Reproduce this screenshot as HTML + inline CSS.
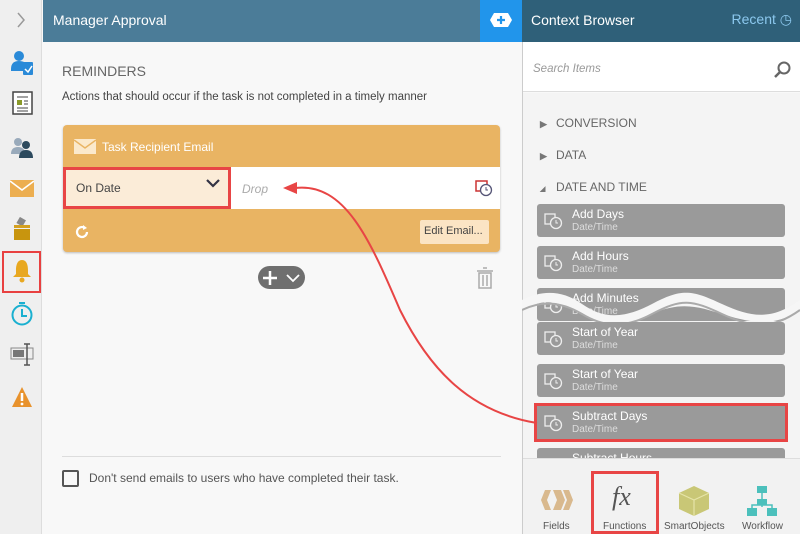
<!DOCTYPE html>
<html><head><meta charset="utf-8"><style>
*{margin:0;padding:0;box-sizing:border-box}
body{width:800px;height:534px;overflow:hidden;font-family:"Liberation Sans",sans-serif;background:#f8f8f8;position:relative}
.abs{position:absolute}
.item{position:absolute;left:537px;width:248px;height:33px;background:#9a9a9a;border-radius:3px;color:#fff}
.item .t{position:absolute;left:35px;top:3px;font-size:12px}
.item .s{position:absolute;left:35px;top:18px;font-size:10px;color:#ddd}
.item svg{position:absolute;left:7px;top:8px}
.cat{position:absolute;left:540px;font-size:12px;color:#666}
.cat b{display:inline-block;font-size:9px;color:#777;width:16px}
.tab{position:absolute;top:521px;font-size:10px;color:#555;text-align:center}
</style></head><body>
<div class="abs" style="left:0;top:0;width:42px;height:534px;background:#efefef;border-right:1px solid #ddd"></div>
<svg class="abs" style="left:16px;top:12px" width="10" height="16"><path d="M2 1l6 7-6 7" stroke="#999" stroke-width="1.5" fill="none"/></svg>
<svg class="abs" style="left:10px;top:50px" width="24" height="26"><circle cx="9" cy="6" r="5" fill="#2a8ad8"/><path d="M1 19q0-8 8-8q7 0 8 5v5H1z" fill="#2a8ad8"/><rect x="13" y="12" width="10" height="13" rx="1" fill="#2a8ad8"/><path d="M15 19l3 3 4-6" stroke="#fff" stroke-width="1.5" fill="none"/></svg>
<svg class="abs" style="left:12px;top:91px" width="22" height="24"><rect x="1" y="1" width="19" height="22" fill="#fff" stroke="#444" stroke-width="1.5"/><rect x="5" y="9" width="5" height="5" fill="#8a9a2a"/><path d="M5 6h11M12 10h4M12 13h4M5 17h11M5 20h11" stroke="#444"/></svg>
<svg class="abs" style="left:10px;top:137px" width="24" height="22"><circle cx="8" cy="5" r="4" fill="#9ab"/><path d="M1 17q0-7 7-7t7 7z" fill="#9ab"/><circle cx="16" cy="8" r="4" fill="#2c4a5e"/><path d="M9 21q0-8 7-8t7 8z" fill="#2c4a5e"/></svg>
<svg class="abs" style="left:10px;top:180px" width="24" height="17"><rect width="24" height="17" fill="#ecae50"/><path d="M0 1l12 9 12-9" stroke="#fff" stroke-width="1.5" fill="none"/></svg>
<svg class="abs" style="left:12px;top:217px" width="20" height="26"><rect x="6" y="1" width="7" height="7" fill="#888" transform="rotate(30 9 4)"/><rect x="2" y="8" width="16" height="3" fill="#d4a020"/><rect x="2" y="12" width="16" height="11" fill="#c8950e"/></svg>
<div class="abs" style="left:2px;top:251px;width:39px;height:42px;border:2px solid #e84040"></div>
<svg class="abs" style="left:11px;top:258px" width="22" height="26"><path d="M11 2c-5 0-6 6-6 10v4l-3 3h18l-3-3v-4c0-4-1-10-6-10z" fill="#e8a820"/><circle cx="11" cy="22" r="2.5" fill="#e8a820"/></svg>
<svg class="abs" style="left:10px;top:301px" width="24" height="26"><circle cx="12" cy="14" r="9.5" fill="none" stroke="#1ab0d0" stroke-width="2"/><path d="M12 8v7h5" stroke="#1ab0d0" stroke-width="2" fill="none"/><path d="M9 2h6" stroke="#1ab0d0" stroke-width="2"/></svg>
<svg class="abs" style="left:10px;top:342px" width="26" height="24"><rect x="1" y="6" width="22" height="11" fill="#eee" stroke="#888"/><rect x="3" y="8" width="11" height="7" fill="#777"/><path d="M17 2v21M14 2h6M14 23h6" stroke="#555" stroke-width="1.5"/></svg>
<svg class="abs" style="left:11px;top:386px" width="22" height="22"><path d="M11 1L21 21H1z" fill="#e8922c"/><path d="M11 7v8" stroke="#fff" stroke-width="2.5"/><circle cx="11" cy="18" r="1.4" fill="#fff"/></svg>
<div class="abs" style="left:43px;top:0;width:437px;height:42px;background:#4b7c98;color:#fff;font-size:14px;padding:12px 10px">Manager Approval</div>
<div class="abs" style="left:480px;top:0;width:42px;height:42px;background:#2195eb"><svg style="position:absolute;left:9px;top:12px" width="24" height="16"><path d="M5 1h14l4 7-4 7H5L1 8z" fill="#fff"/><path d="M12 4v8M8 8h8" stroke="#2195eb" stroke-width="2.2"/></svg></div>
<div class="abs" style="left:522px;top:0;width:278px;height:42px;background:#2f6079;color:#fff;font-size:14px;padding:12px 9px">Context Browser<span style="position:absolute;right:8px;top:11px;color:#8cc8ee;font-size:14px">Recent ◷</span></div>
<div class="abs" style="left:62px;top:63px;color:#666;font-size:14px">REMINDERS</div>
<div class="abs" style="left:62px;top:91px;color:#444;font-size:11.5px">Actions that should occur if the task is not completed in a timely manner</div>
<div class="abs" style="left:63px;top:125px;width:437px;height:127px;background:#e9b463;border-radius:4px;box-shadow:0 1px 2px #bbb"></div>
<svg class="abs" style="left:74px;top:139px" width="22" height="15"><rect width="22" height="15" fill="#fbe9cc"/><path d="M0 1l11 8 11-8" stroke="#e9b463" stroke-width="1.5" fill="none"/></svg>
<div class="abs" style="left:102px;top:140px;color:#fff;font-size:12px">Task Recipient Email</div>
<div class="abs" style="left:63px;top:167px;width:437px;height:42px;background:#fff"></div>
<div class="abs" style="left:63px;top:167px;width:168px;height:42px;background:#fbecd8;border:3px solid #e84545"></div>
<div class="abs" style="left:76px;top:181px;color:#444;font-size:12px">On Date</div>
<svg class="abs" style="left:206px;top:178px" width="14" height="10"><path d="M1 2l6 6 6-6" stroke="#334" stroke-width="2.2" fill="none"/></svg>
<div class="abs" style="left:242px;top:182px;color:#aaa;font-size:12px;font-style:italic">Drop</div>
<svg class="abs" style="left:475px;top:179px" width="18" height="18"><rect x="1" y="2" width="11" height="10" fill="none" stroke="#c33" stroke-width="1.5"/><circle cx="11" cy="11" r="5.5" fill="#fff" stroke="#557" stroke-width="1.3"/><path d="M11 8v3h2" stroke="#557" fill="none"/></svg>
<svg class="abs" style="left:74px;top:224px" width="16" height="16"><path d="M13 8a5 5 0 1 1-2-4" stroke="#fff" stroke-width="2.2" fill="none"/><path d="M9 1l4 3-4 2z" fill="#fff"/></svg>
<div class="abs" style="left:420px;top:220px;width:69px;height:24px;background:#fbe4c4;border-radius:2px;color:#444;font-size:11px;padding:5px 4px;white-space:nowrap;overflow:hidden">Edit Email...</div>
<div class="abs" style="left:258px;top:266px;width:47px;height:23px;background:#6f6f6f;border-radius:12px"></div>
<svg class="abs" style="left:262px;top:268px" width="42" height="20"><path d="M8 3v14M1 10h14" stroke="#fff" stroke-width="2.5"/><path d="M25 7l6 6 6-6" stroke="#fff" stroke-width="1.8" fill="none"/></svg>
<svg class="abs" style="left:476px;top:266px" width="18" height="24"><path d="M1 5h16M7 2h4" stroke="#aaa" stroke-width="1.5"/><rect x="3" y="7" width="12" height="15" fill="none" stroke="#aaa" stroke-width="1.5"/><path d="M7 9v11M11 9v11" stroke="#aaa" stroke-width="1.5"/></svg>
<div class="abs" style="left:62px;top:456px;width:439px;height:1px;background:#ddd"></div>
<div class="abs" style="left:62px;top:470px;width:17px;height:17px;border:2px solid #555;border-radius:2px"></div>
<div class="abs" style="left:89px;top:471px;color:#555;font-size:12px">Don't send emails to users who have completed their task.</div>
<div class="abs" style="left:522px;top:42px;width:1px;height:492px;background:#ccc"></div>
<div class="abs" style="left:523px;top:42px;width:277px;height:50px;background:#fff;border-bottom:1px solid #ddd"></div>
<div class="abs" style="left:533px;top:63px;color:#999;font-size:11.5px;font-style:italic">Search Items</div>
<svg class="abs" style="left:774px;top:61px" width="18" height="18"><circle cx="10" cy="7" r="5.5" fill="none" stroke="#666" stroke-width="2"/><path d="M6 11l-5 5" stroke="#666" stroke-width="2.5"/></svg>
<div class="abs" style="left:523px;top:93px;width:277px;height:365px;background:#f4f4f4"></div>
<div class="cat" style="top:116px"><b>▶</b>CONVERSION</div>
<div class="cat" style="top:148px"><b>▶</b>DATA</div>
<div class="cat" style="top:180px"><b style="font-size:7px">◢</b>DATE AND TIME</div>
<div class="item" style="top:204px"><svg width="20" height="18"><rect x="1" y="2" width="10" height="10" fill="none" stroke="#eee" stroke-width="1.3"/><circle cx="12" cy="11" r="5.5" fill="#9a9a9a" stroke="#eee" stroke-width="1.3"/><path d="M12 8v3h2" stroke="#eee" fill="none"/></svg><div class="t">Add Days</div><div class="s">Date/Time</div></div>
<div class="item" style="top:246px"><svg width="20" height="18"><rect x="1" y="2" width="10" height="10" fill="none" stroke="#eee" stroke-width="1.3"/><circle cx="12" cy="11" r="5.5" fill="#9a9a9a" stroke="#eee" stroke-width="1.3"/><path d="M12 8v3h2" stroke="#eee" fill="none"/></svg><div class="t">Add Hours</div><div class="s">Date/Time</div></div>
<div class="item" style="top:288px"><svg width="20" height="18"><rect x="1" y="2" width="10" height="10" fill="none" stroke="#eee" stroke-width="1.3"/><circle cx="12" cy="11" r="5.5" fill="#9a9a9a" stroke="#eee" stroke-width="1.3"/><path d="M12 8v3h2" stroke="#eee" fill="none"/></svg><div class="t">Add Minutes</div><div class="s">Date/Time</div></div>
<svg class="abs" style="left:522px;top:290px" width="278" height="40"><path d="M0 10 C20 0 40 0 60 14 S100 30 130 14 S170 0 200 14 S250 30 278 10 L278 20 C250 40 220 30 200 24 S160 10 130 24 S90 40 60 24 S20 10 0 20z" fill="#f6f6f6"/><path d="M0 20 C20 10 40 12 60 24 S100 40 130 24 S170 10 200 24 S250 40 278 20" stroke="#aaa" stroke-width="2" fill="none"/></svg>
<div class="item" style="top:322px"><svg width="20" height="18"><rect x="1" y="2" width="10" height="10" fill="none" stroke="#eee" stroke-width="1.3"/><circle cx="12" cy="11" r="5.5" fill="#9a9a9a" stroke="#eee" stroke-width="1.3"/><path d="M12 8v3h2" stroke="#eee" fill="none"/></svg><div class="t">Start of Year</div><div class="s">Date/Time</div></div>
<div class="item" style="top:364px"><svg width="20" height="18"><rect x="1" y="2" width="10" height="10" fill="none" stroke="#eee" stroke-width="1.3"/><circle cx="12" cy="11" r="5.5" fill="#9a9a9a" stroke="#eee" stroke-width="1.3"/><path d="M12 8v3h2" stroke="#eee" fill="none"/></svg><div class="t">Start of Year</div><div class="s">Date/Time</div></div>
<div class="item" style="top:406px;border-radius:0;outline:3px solid #e84545"><svg width="20" height="18"><rect x="1" y="2" width="10" height="10" fill="none" stroke="#eee" stroke-width="1.3"/><circle cx="12" cy="11" r="5.5" fill="#9a9a9a" stroke="#eee" stroke-width="1.3"/><path d="M12 8v3h2" stroke="#eee" fill="none"/></svg><div class="t">Subtract Days</div><div class="s">Date/Time</div></div>
<div class="item" style="top:448px;overflow:hidden;height:12px;border-radius:3px 3px 0 0"><div class="t" style="top:3px">Subtract Hours</div></div>
<div class="abs" style="left:523px;top:458px;width:277px;height:76px;background:#f2f2f2;border-top:1px solid #ddd"></div>
<svg class="abs" style="left:540px;top:489px" width="34" height="22"><path d="M5 1h6l-4 10 4 10H5L1 11z" fill="#d9b98e"/><path d="M13 1h8l4 10-4 10h-8l4-10z" fill="#d9b98e"/><path d="M23 1h6l4 10-4 10h-6l4-10z" fill="#d9b98e"/></svg>
<div class="tab" style="left:543px">Fields</div>
<div class="abs" style="left:591px;top:471px;width:68px;height:63px;border:3px solid #e84545"></div>
<div class="abs" style="left:612px;top:482px;font-family:'Liberation Serif',serif;font-style:italic;font-size:26px;color:#555">fx</div>
<div class="tab" style="left:603px">Functions</div>
<svg class="abs" style="left:678px;top:485px" width="32" height="32"><path d="M16 1l15 7v16l-15 7-15-7V8z" fill="#c9c776"/><path d="M1 8l15 7 15-7M16 15v16" stroke="#e6e4a8" stroke-width="1.2" fill="none"/></svg>
<div class="tab" style="left:664px">SmartObjects</div>
<svg class="abs" style="left:746px;top:485px" width="32" height="32"><rect x="11" y="1" width="10" height="7" fill="#4cc0bc"/><rect x="1" y="23" width="10" height="8" fill="#4cc0bc"/><rect x="21" y="23" width="10" height="8" fill="#4cc0bc"/><rect x="11" y="14" width="10" height="6" fill="#4cc0bc"/><path d="M16 8v6M16 20v2M6 23v-3h20v3" stroke="#4cc0bc" stroke-width="1.5" fill="none"/></svg>
<div class="tab" style="left:742px">Workflow</div>
<svg class="abs" style="left:0;top:0" width="800" height="534"><path d="M537 423 C470 412 430 370 400 310 C370 240 345 182 295 188" stroke="#e84545" stroke-width="2" fill="none"/><path d="M283 188l14-6v12z" fill="#e84545"/></svg>
</body></html>
